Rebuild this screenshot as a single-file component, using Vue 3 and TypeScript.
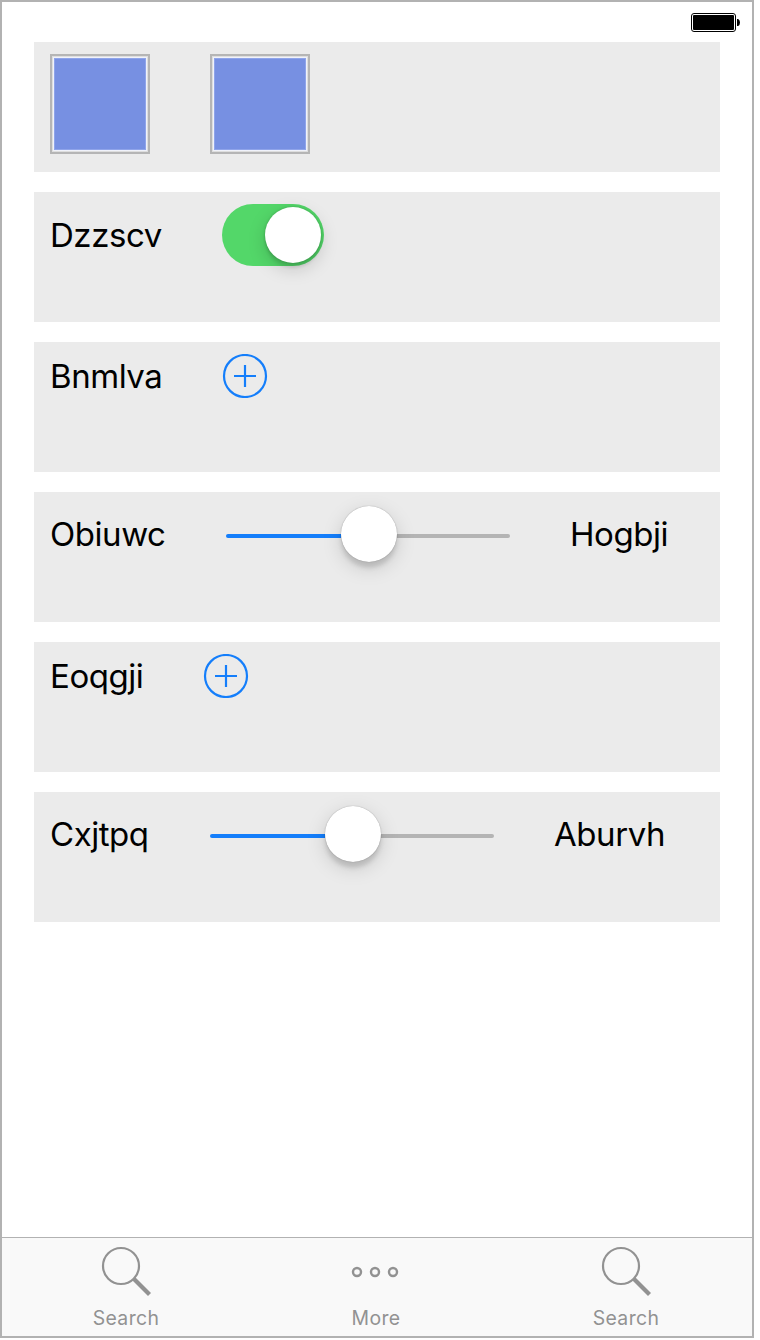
<script setup lang="ts">
interface Row {
  kind: 'swatches' | 'toggle' | 'add' | 'slider'
  label?: string
  cls?: string
  trailing?: string
  trailingCls?: string
}

const rows: Row[] = [
  { kind: 'swatches' },
  { kind: 'toggle', label: 'Dzzscv', cls: 'w-a' },
  { kind: 'add', label: 'Bnmlva', cls: 'w-b' },
  { kind: 'slider', label: 'Obiuwc', cls: 'w-c', trailing: 'Hogbji', trailingCls: 'w-d' },
  { kind: 'add', label: 'Eoqgji', cls: 'w-e' },
  { kind: 'slider', label: 'Cxjtpq', cls: 'w-f', trailing: 'Aburvh', trailingCls: 'w-g' },
]

const tabs = [
  { icon: 'search', title: 'Search' },
  { icon: 'more', title: 'More' },
  { icon: 'search', title: 'Search' },
]
</script>

<template>
  <div class="phone">
    <header class="status">
      <svg class="battery" width="50" height="20" viewBox="0 0 50 20">
        <rect x="0.5" y="0.5" width="44" height="18" rx="2.5" fill="#fff" stroke="#000" />
        <rect x="2" y="2" width="41" height="15" rx="1" fill="#000" />
        <path d="M46 6h1.2q1.8 1 1.8 3.5t-1.8 3.5h-1.2z" fill="#000" />
      </svg>
    </header>

    <main class="list">
      <section v-for="(row, i) in rows" :key="i" class="card">
        <div class="line" :class="row.kind">
          <template v-if="row.kind === 'swatches'">
            <div class="swatch"></div>
            <div class="swatch"></div>
          </template>
          <span v-if="row.label" class="label" :class="row.cls">{{ row.label }}</span>
          <div v-if="row.kind === 'toggle'" class="switch"><div class="knob"></div></div>
          <svg v-if="row.kind === 'add'" class="plus" width="46" height="44" viewBox="0 0 46 44">
            <circle cx="23" cy="22" r="21" />
            <path d="M12 22h22M23 11v22" />
          </svg>
          <div v-if="row.kind === 'slider'" class="slider">
            <div class="track filled"></div>
            <div class="knob"></div>
            <div class="track"></div>
          </div>
          <span v-if="row.trailing" class="label" :class="row.trailingCls">{{ row.trailing }}</span>
        </div>
      </section>
    </main>

    <nav class="tabs">
      <div v-for="(tab, i) in tabs" :key="i" class="tab">
        <svg v-if="tab.icon === 'search'" width="50" height="50" viewBox="0 0 50 50">
          <circle cx="20" cy="20" r="18" stroke-width="2.2" />
          <path d="M32.5 32.5L48.5 48.5" stroke-width="4.2" />
        </svg>
        <svg v-else width="50" height="50" viewBox="0 0 50 50">
          <circle cx="6" cy="26" r="4" stroke-width="2.4" />
          <circle cx="24" cy="26" r="4" stroke-width="2.4" />
          <circle cx="42" cy="26" r="4" stroke-width="2.4" />
        </svg>
        <span class="title">{{ tab.title }}</span>
      </div>
    </nav>
  </div>
</template>

<style>
body {
  margin: 0;
  background: #fff;
}
</style>

<style scoped>
.phone {
  box-sizing: border-box;
  display: flex;
  flex-direction: column;
  width: 754px;
  height: 1338px;
  border: 2px solid #b2b2b2;
  background: #fff;
  font-family: Inter, "Liberation Sans", sans-serif;
}
.status {
  display: flex;
  justify-content: flex-end;
  box-sizing: border-box;
  height: 40px;
  padding: 11px 11px 0 0;
}
.battery {
  display: block;
}
.list {
  display: flex;
  flex-direction: column;
  flex: 1;
  gap: 20px;
  padding: 0 32px;
}
.card {
  box-sizing: border-box;
  height: 130px;
  padding: 12px 16px;
  background: #ebebeb;
}
.line {
  display: flex;
  align-items: center;
  gap: 60px;
}
.toggle {
  height: 62px;
}
.add {
  height: 44px;
}
.slider.line {
  height: 60px;
}
.swatch {
  box-sizing: border-box;
  width: 100px;
  height: 100px;
  border: 2px solid #b5b5b5;
  background: #7790e2;
  box-shadow: inset 0 0 0 1px #dedede, inset 0 0 0 2px #f0f2fa, inset 0 0 0 3px #8fa4ea;
}
.label {
  flex: none;
  font-size: 33px;
  line-height: 40px;
  letter-spacing: -0.45px;
  color: #000;
  white-space: nowrap;
}
.w-a { width: 112px; }
.w-b { width: 112px; }
.w-c { width: 116px; }
.w-d { width: 98px; }
.w-e { width: 93px; }
.w-f { width: 100px; }
.w-g { width: 110px; }
.knob {
  flex: none;
  width: 56px;
  height: 56px;
  border-radius: 50%;
  background: #fff;
}
.switch {
  display: flex;
  align-items: center;
  justify-content: flex-end;
  box-sizing: border-box;
  width: 102px;
  height: 62px;
  padding-right: 3px;
  border-radius: 31px;
  background: #53d769;
}
.switch .knob {
  box-shadow: 0 5px 3px rgba(0, 0, 0, 0.08), 0 6px 18px rgba(0, 0, 0, 0.17), 0 0 3px rgba(0, 0, 0, 0.2);
}
.plus {
  flex: none;
  fill: none;
  stroke: #147efb;
  stroke-width: 2.2;
}
.slider:not(.line) {
  display: flex;
  align-items: center;
  width: 284px;
}
.slider .knob {
  z-index: 1;
  box-shadow: 0 0 1px rgba(0, 0, 0, 0.4), 0 6px 4px rgba(0, 0, 0, 0.12), 0 6px 20px rgba(0, 0, 0, 0.15);
}
.track {
  flex: 1;
  height: 4px;
  margin-top: 4px;
  border-radius: 0 2px 2px 0;
  background: #b4b4b4;
}
.track.filled {
  flex: none;
  width: 115px;
  border-radius: 2px 0 0 2px;
  background: #147efb;
}
.tabs {
  display: flex;
  box-sizing: border-box;
  height: 99px;
  padding-right: 2px;
  border-top: 1px solid #b2b2b2;
  background: #f9f9f9;
}
.tab {
  display: flex;
  flex: 0 0 250px;
  flex-direction: column;
  align-items: center;
  box-sizing: border-box;
  padding: 8px 2px 0 0;
  color: #929292;
}
.tab svg {
  display: block;
  fill: none;
  stroke: currentColor;
}
.title {
  margin-top: 10px;
  font-size: 19.4px;
  line-height: 24px;
  letter-spacing: 0.4px;
}
</style>
